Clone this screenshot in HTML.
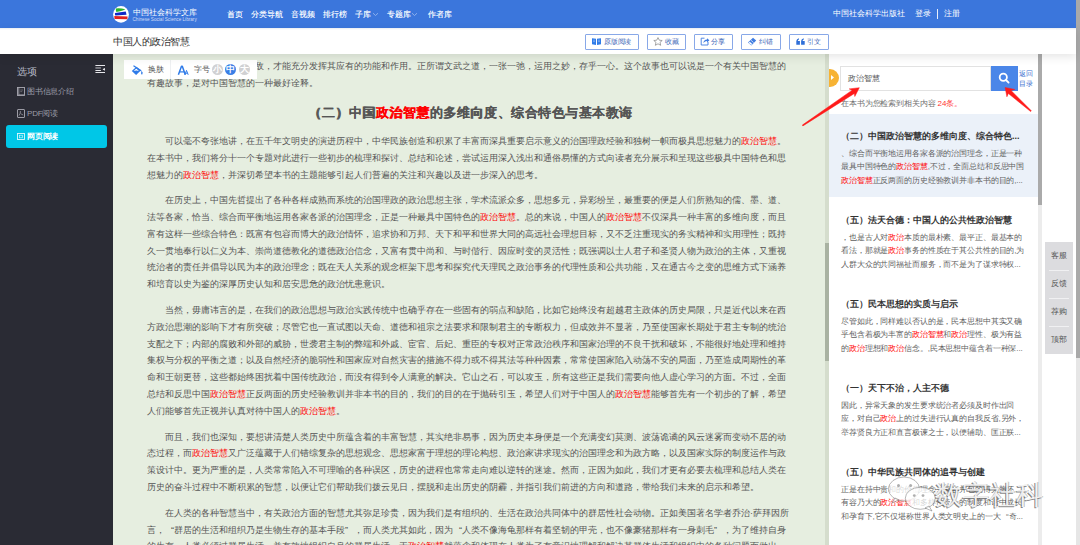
<!DOCTYPE html>
<html><head><meta charset="utf-8">
<style>
*{margin:0;padding:0;box-sizing:border-box;}
html,body{width:1080px;height:545px;overflow:hidden;background:#fff;font-family:"Liberation Sans",sans-serif;}
.a{position:absolute;}
#hdr{left:0;top:0;width:1076px;height:28px;background:#3b76dc;}
#pscroll{left:1076px;top:0;width:4px;height:545px;background:linear-gradient(#a9a9a9 0,#a9a9a9 358px,#e6e6e6 358px);}
#bar{left:0;top:28px;width:1076px;height:26px;background:#fff;box-shadow:0 3px 10px rgba(0,0,0,0.10);z-index:5;}
#side{left:0;top:54px;width:113px;height:491px;background:#2a2b34;}
#main{left:113px;top:54px;width:712px;height:491px;background:#e6eee0;overflow:hidden;}
#mtrack{left:825px;top:54px;width:4px;height:491px;background:#d5ddcd;}
#mthumb{left:825px;top:243px;width:4px;height:118px;background:#a9b2a2;}
#panel{left:829px;top:54px;width:209px;height:491px;background:#fff;overflow:hidden;}
#ptrack{left:1038px;top:54px;width:4px;height:491px;background:#ececec;}
#pthumb{left:1038px;top:54px;width:4px;height:151px;background:#aaaaaa;}
.nav{color:#fff;font-size:8px;text-shadow:0.3px 0 0 rgba(255,255,255,0.6);top:10.5px;white-space:nowrap;line-height:8px;}
.btn{top:34px;height:16px;border:1px solid #88a8e8;border-radius:1px;color:#4d74c0;font-size:7px;line-height:14px;white-space:nowrap;}
.txt{font-size:9px;line-height:16.875px;color:#555;white-space:nowrap;}
.r{color:#f00;text-shadow:inherit}
.ql{display:inline-block;width:1em;text-align:right;text-indent:0}
.qr{display:inline-block;width:1em;text-align:left;text-indent:0}
.hd{font-size:13px;letter-spacing:0.51px;font-weight:bold;color:#555;text-shadow:0.35px 0 0 currentColor;text-align:center;width:639px;line-height:20px;margin:11px 0 10px;position:relative;left:4px;}
.pp{margin-bottom:8.6px;}
.fb{left:1045px;width:28px;text-align:center;font-size:8px;color:#555;line-height:9px;white-space:nowrap;}
.ptl{font-size:9px;font-weight:bold;color:#333;line-height:10px;white-space:nowrap;}
.psn{font-size:8px;letter-spacing:-0.125px;color:#5f5f5f;line-height:13.6px;white-space:nowrap;}
</style></head><body>
<div class="a" id="hdr"></div>
<div class="a" id="pscroll"></div>
<svg class="a" style="left:112px;top:5px" width="18" height="19" viewBox="0 0 18 19">
<ellipse cx="9" cy="9.4" rx="7.9" ry="8.4" fill="#fff"/>
<path d="M3.9 3.4 Q8.5 2.9 13.2 4.2 Q12.8 5.4 4.3 6.9 Q3.6 5.2 3.9 3.4Z" fill="#2bb52b"/>
<path d="M3 8 L13.8 6.4 L14.5 9.7 L3.3 10.4 Q2.7 9.2 3 8Z" fill="#1028c8"/>
<path d="M2.3 10.9 L15.6 11.6 L15.4 14.2 L2.5 14.1Z" fill="#e02020"/>
</svg>
<div class="a" style="left:132.5px;top:8px;color:#fff;font-size:8px;line-height:10px;white-space:nowrap;letter-spacing:0.125px">中国社会科学文库</div>
<div class="a" style="left:132.5px;top:16.5px;color:#d0dcf6;font-size:4.65px;line-height:5px;white-space:nowrap;">Chinese Social Science Library</div>
<div class="a nav" style="left:226.5px">首页</div>
<div class="a nav" style="left:250.5px">分类导航</div>
<div class="a nav" style="left:290.5px">音视频</div>
<div class="a nav" style="left:322.5px">排行榜</div>
<div class="a nav" style="left:354.5px">子库</div>
<svg class="a" style="left:372px;top:12px" width="7" height="5"><path d="M1 1.2 L3.5 3.5 L6 1.2" stroke="#9fbcef" stroke-width="0.8" fill="none"/></svg>
<div class="a nav" style="left:386.5px">专题库</div>
<svg class="a" style="left:411px;top:12px" width="7" height="5"><path d="M1 1.2 L3.5 3.5 L6 1.2" stroke="#9fbcef" stroke-width="0.8" fill="none"/></svg>
<div class="a nav" style="left:427.5px">作者库</div>
<div class="a" style="left:833px;top:10px;color:#fff;font-size:7.9px;line-height:8px;white-space:nowrap;">中国社会科学出版社</div>
<div class="a" style="left:915px;top:10px;color:#fff;font-size:7.9px;line-height:8px;white-space:nowrap;">登录</div>
<div class="a" style="left:937px;top:9px;width:1px;height:10px;background:#e8eefb"></div>
<div class="a" style="left:944px;top:10px;color:#fff;font-size:7.9px;line-height:8px;white-space:nowrap;">注册</div>

<div class="a" id="bar"></div>
<div class="a" style="left:0;top:28px;width:1076px;height:2px;background:linear-gradient(rgba(30,60,120,0.10),rgba(30,60,120,0));z-index:7"></div>
<div class="a btn" style="left:585px;width:54px;z-index:6"></div>
<svg class="a" style="left:592px;top:38px;z-index:7" width="9" height="7" viewBox="0 0 9 7"><path d="M0 0.3 L4 0.8 L4 7 L0 6.3Z M5 0.8 L9 0.3 L9 6.3 L5 7Z" fill="#2f7be8"/><path d="M1 2.2h2M1 3.6h2M6 2.2h2M6 3.6h2" stroke="#b9d3fa" stroke-width="0.5"/></svg>
<div class="a" style="left:604px;top:38px;color:#4469b8;font-size:7px;letter-spacing:-0.25px;line-height:8px;white-space:nowrap;z-index:7">原版阅读</div>
<div class="a btn" style="left:647px;width:39px;z-index:6"></div>
<svg class="a" style="left:653px;top:37px;z-index:7" width="10" height="9" viewBox="0 0 10 9"><path d="M5 0.6 L6.3 3.2 L9.2 3.5 L7 5.4 L7.7 8.3 L5 6.8 L2.3 8.3 L3 5.4 L0.8 3.5 L3.7 3.2Z" fill="none" stroke="#8a8a8a" stroke-width="0.75" stroke-linejoin="round"/></svg>
<div class="a" style="left:665px;top:38px;color:#4469b8;font-size:7px;letter-spacing:-0.25px;line-height:8px;white-space:nowrap;z-index:7">收藏</div>
<div class="a btn" style="left:694px;width:39px;z-index:6"></div>
<svg class="a" style="left:700px;top:37px;z-index:7" width="10" height="9" viewBox="0 0 10 9"><path d="M4.5 1.2 H1.2 V8 H8 V5" fill="none" stroke="#3f7ce0" stroke-width="0.9"/><path d="M3.3 6 Q3.8 2.8 7 2.6 V1.2 L9.4 3.3 L7 5.4 V4 Q5 4 3.3 6Z" fill="#3f7ce0"/></svg>
<div class="a" style="left:711px;top:38px;color:#4469b8;font-size:7px;letter-spacing:-0.25px;line-height:8px;white-space:nowrap;z-index:7">分享</div>
<div class="a btn" style="left:741px;width:40px;z-index:6"></div>
<svg class="a" style="left:747px;top:37px;z-index:7" width="10" height="9" viewBox="0 0 10 9"><path d="M6 0.8 L9.2 3.5 L4.3 8.4 L1 5.6Z" fill="#3f7ce0"/><path d="M3.9 3.2 L6.6 5.6" stroke="#fff" stroke-width="0.7"/><path d="M1.6 5.8 L2.8 4.7 L5.3 6.9 L4.2 8" fill="#fff"/></svg>
<div class="a" style="left:759px;top:38px;color:#4469b8;font-size:7px;letter-spacing:-0.25px;line-height:8px;white-space:nowrap;z-index:7">纠错</div>
<div class="a btn" style="left:789px;width:40px;z-index:6"></div>
<svg class="a" style="left:796px;top:38px;z-index:7" width="9" height="7" viewBox="0 0 9 7"><path d="M0.3 3 Q0.5 0.6 3 0.2 V1.4 Q1.9 1.8 1.8 2.9 H3.9 V6.8 H0.3Z M5.1 3 Q5.3 0.6 7.8 0.2 V1.4 Q6.7 1.8 6.6 2.9 H8.7 V6.8 H5.1Z" fill="#2f6fd8"/></svg>
<div class="a" style="left:807px;top:38px;color:#4469b8;font-size:7px;letter-spacing:-0.25px;line-height:8px;white-space:nowrap;z-index:7">引文</div>

<div class="a" style="left:113px;top:37px;color:#333;font-size:10px;letter-spacing:-0.44px;line-height:10px;white-space:nowrap;z-index:6">中国人的政治智慧</div>

<div class="a" id="side"></div>
<div class="a" style="left:17px;top:67px;color:#b9bdc9;font-size:10px;letter-spacing:-0.5px;line-height:10px;white-space:nowrap;">选项</div>
<svg class="a" style="left:95px;top:64px" width="10" height="10" viewBox="0 0 10 10"><rect x="0.4" y="1" width="9.6" height="1" fill="#e6e6ea"/><rect x="0.4" y="3.2" width="5.5" height="1.5" fill="#8e8f96"/><rect x="0.4" y="6" width="5.5" height="1" fill="#e6e6ea"/><rect x="0.4" y="8" width="9.6" height="1" fill="#e6e6ea"/><path d="M10 3.9 L10 6.7 L7.9 5.6 Q7.5 5.3 7.9 5Z" fill="#e6e6ea"/></svg>
<svg class="a" style="left:17px;top:87px" width="8" height="9" viewBox="0 0 8 9"><rect x="0.5" y="0.5" width="7" height="8" fill="none" stroke="#a9a9b2" stroke-width="0.9"/><path d="M1.8 0.5 V8.5" stroke="#a9a9b2" stroke-width="0.8"/><path d="M3.3 3 H6 M3.3 4.6 H5.2" stroke="#8a8a92" stroke-width="0.6"/><path d="M1.5 7.6 H7.5" stroke="#a9a9b2" stroke-width="0.6"/></svg>
<div class="a" style="left:27px;top:87px;color:#9c9da8;font-size:8px;letter-spacing:-0.2px;line-height:9px;white-space:nowrap;">图书信息介绍</div>
<svg class="a" style="left:17px;top:109px" width="8" height="9" viewBox="0 0 8 9"><rect x="0.5" y="0.5" width="7" height="8" rx="0.5" fill="none" stroke="#a9a9b2" stroke-width="0.9"/><path d="M3.4 2 Q3.6 4.4 2 6.6 M3.5 4.2 Q4.6 5.6 6.2 6" stroke="#a9a9b2" stroke-width="0.7" fill="none"/></svg>
<div class="a" style="left:27px;top:109px;color:#9c9da8;font-size:8px;letter-spacing:-0.2px;line-height:9px;white-space:nowrap;">PDF阅读</div>
<div class="a" style="left:6px;top:125px;width:101px;height:23px;background:#00c7e7;border-radius:3px;"></div>
<svg class="a" style="left:17px;top:133px" width="8" height="7" viewBox="0 0 8 7"><rect x="0.5" y="0.5" width="7" height="6" fill="none" stroke="#dff8fc" stroke-width="0.9"/><rect x="2.6" y="2.2" width="2.8" height="2.6" fill="none" stroke="#dff8fc" stroke-width="0.6"/></svg>
<div class="a" style="left:27px;top:132px;color:#fff;font-size:8px;letter-spacing:-0.2px;line-height:9px;font-weight:bold;white-space:nowrap;">网页阅读</div>

<div class="a" id="main"></div><div class="a txt" style="left:147px;top:58px;"><div style="text-indent:0">文武之道有张有弛刚柔相克敌，才能充分发挥其应有的功能和作用。正所谓文武之道，一张一弛，运用之妙，存乎一心。这个故事也可以说是一个有关中国智慧的</div><div>有趣故事，是对中国智慧的一种最好诠释。</div><div class="hd">（二）中国<span class="r">政治智慧</span>的多维向度、综合特色与基本教诲</div><div class="pp"><div style="text-indent:18px">可以毫不夸张地讲，在五千年文明史的演进历程中，中华民族创造和积累了丰富而深具重要启示意义的治国理政经验和独树一帜而极具思想魅力的<span class="r">政治智慧</span>。</div><div>在本书中，我们将分十一个专题对此进行一些初步的梳理和探讨、总结和论述，尝试运用深入浅出和通俗易懂的方式向读者充分展示和呈现这些极具中国特色和思</div><div>想魅力的<span class="r">政治智慧</span>，并深切希望本书的主题能够引起人们普遍的关注和兴趣以及进一步深入的思考。</div></div><div class="pp"><div style="text-indent:18px">在历史上，中国先哲提出了各种各样成熟而系统的治国理政的政治思想主张，学术流派众多，思想多元，异彩纷呈，最重要的便是人们所熟知的儒、墨、道、</div><div>法等各家，恰当、综合而平衡地运用各家各派的治国理念，正是一种最具中国特色的<span class="r">政治智慧</span>。总的来说，中国人的<span class="r">政治智慧</span>不仅深具一种丰富的多维向度，而且</div><div>富有这样一些综合特色：既富有包容而博大的政治情怀，追求协和万邦、天下和平和世界大同的高远社会理想目标，又不乏注重现实的务实精神和实用理性；既持</div><div>久一贯地奉行以仁义为本、崇尚道德教化的道德政治信念，又富有贯中尚和、与时偕行、因应时变的灵活性；既强调以士人君子和圣贤人物为政治的主体，又重视</div><div>统治者的责任并倡导以民为本的政治理念；既在天人关系的观念框架下思考和探究代天理民之政治事务的代理性质和公共功能，又在通古今之变的思维方式下涵养</div><div>和培育以史为鉴的深厚历史认知和居安思危的政治忧患意识。</div></div><div class="pp"><div style="text-indent:18px">当然，毋庸讳言的是，在我们的政治思想与政治实践传统中也确乎存在一些固有的弱点和缺陷，比如它始终没有超越君主政体的历史局限，只是近代以来在西</div><div>方政治思潮的影响下才有所突破；尽管它也一直试图以天命、道德和祖宗之法要求和限制君主的专断权力，但成效并不显著，乃至使国家长期处于君主专制的统治</div><div>支配之下；内部的腐败和外部的威胁，世袭君主制的弊端和外戚、宦官、后妃、重臣的专权对正常政治秩序和国家治理的不良干扰和破坏，不能很好地处理和维持</div><div>集权与分权的平衡之道；以及自然经济的脆弱性和国家应对自然灾害的措施不得力或不得其法等种种因素，常常使国家陷入动荡不安的局面，乃至造成周期性的革</div><div>命和王朝更替，这些都始终困扰着中国传统政治，而没有得到令人满意的解决。它山之石，可以攻玉，所有这些正是我们需要向他人虚心学习的方面。不过，全面</div><div>总结和反思中国<span class="r">政治智慧</span>正反两面的历史经验教训并非本书的目的，我们的目的在于抛砖引玉，希望人们对于中国人的<span class="r">政治智慧</span>能够首先有一个初步的了解，希望</div><div>人们能够首先正视并认真对待中国人的<span class="r">政治智慧</span>。</div></div><div class="pp"><div style="text-indent:18px">而且，我们也深知，要想讲清楚人类历史中所蕴含着的丰富智慧，其实绝非易事，因为历史本身便是一个充满变幻莫测、波荡诡谲的风云迷雾而变动不居的动</div><div>态过程，而<span class="r">政治智慧</span>又广泛蕴藏于人们错综复杂的思想观念、思想家富于理想的理论构想、政治家讲求现实的治国理念和为政方略，以及国家实际的制度运作与政</div><div>策设计中。更为严重的是，人类常常陷入不可理喻的各种误区，历史的进程也常常走向难以逆转的迷途。然而，正因为如此，我们才更有必要去梳理和总结人类在</div><div>历史的奋斗过程中不断积累的智慧，以便让它们帮助我们拨云见日，摆脱和走出历史的阴霾，并指引我们前进的方向和道路，带给我们未来的启示和希望。</div></div><div class="pp"><div style="text-indent:18px">在人类的各种智慧当中，有关政治方面的智慧尤其弥足珍贵，因为我们是有组织的、生活在政治共同体中的群居性社会动物。正如美国著名学者乔治·萨拜因所</div><div>言，<span class="ql">“</span>群居的生活和组织乃是生物生存的基本手段<span class="qr">”</span>，而人类尤其如此，因为<span class="ql">“</span>人类不像海龟那样有着坚韧的甲壳，也不像豪猪那样有一身刺毛<span class="qr">”</span>，为了维持自身</div><div>的生存，人类必须过群居生活，并有效地组织自身的群居生活。于<span class="r">政治智慧</span>就蕴含和体现在人类为了有意识地理解和解决其群体生活和组织中的各种问题而做出</div></div></div>
<div class="a" style="left:124px;top:60px;width:133px;height:19px;background:#fff;"></div>
<div class="a" style="left:170px;top:60px;width:1px;height:19px;background:#eef0f2;"></div>
<svg class="a" style="left:131px;top:65px" width="13" height="11" viewBox="0 0 13 11"><path d="M0.8 6 L5.1 10.1 L9.8 5.5 L5.4 1.8 Z" fill="#2f7be8"/><path d="M2.7 6 L5.3 3.6 L7.9 5.9 Q5.2 5 2.7 6Z" fill="#fff"/><path d="M2.9 1 L9.8 5.5" stroke="#2f7be8" stroke-width="1.3" stroke-linecap="round"/><path d="M10.5 5.8 Q12.4 7.8 11.4 9.2 Q10.2 9.8 10.1 8.4 Q10.2 7 10.5 5.8Z" fill="#2f7be8"/></svg>
<div class="a" style="left:147.5px;top:66px;color:#555;font-size:8px;line-height:8px;white-space:nowrap;">换肤</div>
<svg class="a" style="left:177px;top:65px" width="13" height="11" viewBox="0 0 13 11"><path d="M1.4 9.8 L4.5 1.2 L5.3 1.2 L8.3 9.8" stroke="#2f7be8" stroke-width="1.5" fill="none" stroke-linejoin="round"/><path d="M2.7 6.9 H7" stroke="#2f7be8" stroke-width="1.2"/><path d="M7.9 9.8 L9.5 5.4 L11.2 9.8 M8.6 8.2 H10.6" stroke="#2f7be8" stroke-width="1" fill="none"/></svg>
<div class="a" style="left:193.5px;top:66px;color:#555;font-size:8px;line-height:8px;white-space:nowrap;">字号</div>
<div class="a" style="left:211.5px;top:64px;width:11px;height:11px;border-radius:50%;background:#d0d0d2;color:#fff;font-size:9px;line-height:11px;text-align:center;font-weight:bold">小</div>
<div class="a" style="left:225px;top:64px;width:11px;height:11px;border-radius:50%;background:#3a7ee6;color:#fff;font-size:9px;line-height:11px;text-align:center;font-weight:bold">中</div>
<div class="a" style="left:238.8px;top:64px;width:11px;height:11px;border-radius:50%;background:#d0d0d2;color:#fff;font-size:9px;line-height:11px;text-align:center;font-weight:bold">大</div>

<div class="a" id="mtrack"></div>
<div class="a" id="mthumb"></div>
<div class="a" id="panel"></div>
<div class="a" style="left:829px;top:68.5px;width:10px;height:18px;border-radius:0 9px 9px 0;background:#f7b334;"></div>
<svg class="a" style="left:830px;top:74px" width="5" height="7" viewBox="0 0 5 7"><path d="M1 1 L4 3.5 L1 6Z" fill="#fff"/></svg>
<div class="a" style="left:840px;top:66px;width:151px;height:25px;border:1px solid #e2e2e2;background:#fff"></div>
<div class="a" style="left:847.5px;top:74px;color:#555;font-size:8px;line-height:9px;white-space:nowrap">政治智慧</div>
<div class="a" style="left:991px;top:66px;width:26.5px;height:25px;background:#4a86e8"></div>
<svg class="a" style="left:997px;top:71px" width="15" height="15" viewBox="0 0 15 15"><circle cx="6.3" cy="6.3" r="3.6" fill="none" stroke="#fff" stroke-width="1.8"/><path d="M9 9 L11.6 11.6" stroke="#fff" stroke-width="1.8" stroke-linecap="round"/></svg>
<div class="a" style="left:1019px;top:69px;color:#3d72d0;font-size:7px;line-height:9.5px;letter-spacing:-0.3px;white-space:nowrap">返回<br>目录</div>
<div class="a" style="left:841px;top:99px;color:#707070;font-size:8px;letter-spacing:-0.125px;line-height:9px;white-space:nowrap">在本书为您检索到相关内容 <span style="color:#f33">24条。</span></div>
<div class="a" style="left:829px;top:113.5px;width:209px;height:83.5px;background:#ebf1f9"></div><div class="a ptl" style="left:841px;top:130.5px">（二）中国政治智慧的多维向度、综合特色...</div><div class="a psn" style="left:841px;top:146.5px"><div>、综合而平衡地运用各家各派的治国理念，正是一种</div><div>最具中国特色的<span class="r">政治智慧</span>,不过，全面总结和反思中国</div><div><span class="r">政治智慧</span>正反两面的历史经验教训并非本书的目的,...</div></div><div class="a ptl" style="left:841px;top:214.6px">（五）法天合德：中国人的公共性政治智慧</div><div class="a psn" style="left:841px;top:230.6px"><div>，也是古人对<span class="r">政治</span>本质的最朴素、最平正、最基本的</div><div>看法，那就是<span class="r">政治</span>事务的性质在于其公共性的目的,为</div><div>人群大众的共同福祉而服务，而不是为了谋求特权...</div></div><div class="a ptl" style="left:841px;top:298.7px">（五）民本思想的实质与启示</div><div class="a psn" style="left:841px;top:314.7px"><div>尽管如此，同样难以否认的是，民本思想中其实又确</div><div>乎包含着极为丰富的<span class="r">政治智慧</span>和<span class="r">政治</span>理性、极为有益</div><div>的<span class="r">政治</span>理想和<span class="r">政治</span>信念。,民本思想中蕴含着一种深...</div></div><div class="a ptl" style="left:841px;top:382.8px">（一）天下不治，人主不德</div><div class="a psn" style="left:841px;top:398.8px"><div>因此，异常天象的发生要求统治者必须及时作出回</div><div>应，对自己<span class="r">政治</span>上的过失进行认真的自我反省,另外，</div><div>举荐贤良方正和直言极谏之士，以便辅助、匡正朕...</div></div><div class="a ptl" style="left:841px;top:466.9px">（五）中华民族共同体的追寻与创建</div><div class="a psn" style="left:841px;top:482.9px"><div>正是在持中贵和的价值理念、兼容并包的博大胸怀</div><div>有容乃大的<span class="r">政治智慧</span>和多样性统一的制度和谐中成长</div><div>和孕育下,它不仅堪称世界人类文明史上的一大<span class="ql">“</span>奇...</div></div>
<div class="a" id="ptrack"></div>
<div class="a" id="pthumb"></div>
<div class="a" style="left:1045px;top:241.5px;width:28px;height:112.5px;background:#dcdcdf"></div>
<div class="a" style="left:1049px;top:269.5px;width:20px;height:1px;background:#f0f0f2"></div>
<div class="a" style="left:1049px;top:297.5px;width:20px;height:1px;background:#f0f0f2"></div>
<div class="a" style="left:1049px;top:325.5px;width:20px;height:1px;background:#f0f0f2"></div>
<div class="a fb" style="top:251px">客服</div>
<div class="a fb" style="top:279px">反馈</div>
<div class="a fb" style="top:307px">荐购</div>
<div class="a fb" style="top:335px">顶部</div>


<svg class="a" style="left:0;top:0;z-index:20" width="1080" height="545" viewBox="0 0 1080 545">
<polygon points="802.88,125.92 854.41,93.46 854.8,96.5 859.3,87.7 849.2,88.9 852.19,90.14 802.32,125.08" fill="#ff1a1a" stroke="#ff1a1a" stroke-width="0.5" stroke-linejoin="round"/>
<polygon points="1031.34,110.83 1011.05,90.52 1014.8,89.4 1005.1,87.5 1006.9,96.8 1008.35,93.48 1030.66,111.57" fill="#ff1a1a" stroke="#ff1a1a" stroke-width="0.5" stroke-linejoin="round"/>
<g fill="rgba(255,255,255,0.75)" stroke="rgba(90,90,90,0.55)" stroke-width="0.8">
<ellipse cx="904" cy="489" rx="15.5" ry="12"/>
<path d="M895 498 L892 503 L899 500Z"/>
<ellipse cx="920.3" cy="498.3" rx="15" ry="11"/>
<path d="M929 506 L932 511 L925 508Z"/>
</g>
<g fill="rgba(120,120,120,0.6)"><circle cx="898.5" cy="485.4" r="1.5"/><circle cx="910.6" cy="485.4" r="1.5"/><circle cx="914.3" cy="495.6" r="1.4"/><circle cx="923" cy="495.6" r="1.4"/></g>
</svg>
<div class="a" style="left:935px;top:480px;z-index:21;font-size:27px;line-height:30px;letter-spacing:0px;color:rgba(255,255,255,0.88);text-shadow:-0.8px 0.8px 0.3px rgba(50,50,50,0.6),0.5px -0.4px 0.3px rgba(80,80,80,0.4);white-space:nowrap">数字社科</div>
</body></html>
